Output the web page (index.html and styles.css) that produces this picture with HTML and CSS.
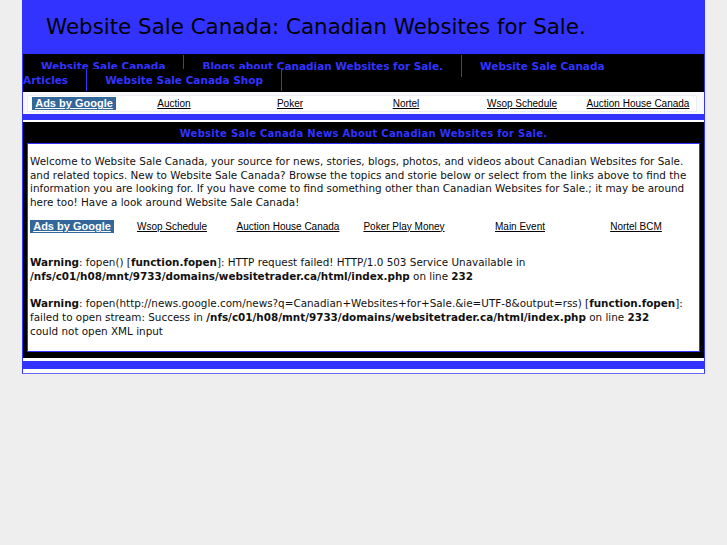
FILE: index.html
```html
<!DOCTYPE html>
<html>
<head>
<meta charset="utf-8">
<title>Website Sale Canada</title>
<link rel="stylesheet" href="styles.css">
</head>
<body>
<div class="page">
  <div class="header">
    <h1 class="title">Website Sale Canada: Canadian Websites for Sale.</h1>
  </div>
  <div class="nav"><a class="nav-link" href="#">Website Sale Canada</a><a class="nav-link" href="#">Blogs about Canadian Websites for Sale.</a><a class="nav-link" href="#">Website Sale Canada Articles</a><a class="nav-link" href="#">Website Sale Canada Shop</a></div>
  <div class="adbar">
    <div class="adrow top-row">
      <span class="ads-cell"><a class="ads-by" href="#">Ads by Google</a></span>
      <span class="ad-cell"><a href="#">Auction</a></span>
      <span class="ad-cell"><a href="#">Poker</a></span>
      <span class="ad-cell"><a href="#">Nortel</a></span>
      <span class="ad-cell"><a href="#">Wsop Schedule</a></span>
      <span class="ad-cell"><a href="#">Auction House Canada</a></span>
    </div>
  </div>
  <div class="band"></div>
  <div class="news">
    <div class="news-title">Website Sale Canada News About Canadian Websites for Sale.</div>
    <div class="news-body">
      <p class="intro">Welcome to Website Sale Canada, your source for news, stories, blogs, photos, and videos about Canadian Websites for Sale. and related topics. New to Website Sale Canada? Browse the topics and storie below or select from the links above to find the information you are looking for. If you have come to find something other than Canadian Websites for Sale.; it may be around here too! Have a look around Website Sale Canada!</p>
      <div class="adrow inner-row">
        <span class="ads-cell"><a class="ads-by" href="#">Ads by Google</a></span>
        <span class="ad-cell"><a href="#">Wsop Schedule</a></span>
        <span class="ad-cell"><a href="#">Auction House Canada</a></span>
        <span class="ad-cell"><a href="#">Poker Play Money</a></span>
        <span class="ad-cell"><a href="#">Main Event</a></span>
        <span class="ad-cell"><a href="#">Nortel BCM</a></span>
      </div>
      <div class="warn"><br>
<b>Warning</b>: fopen() [<b>function.fopen</b>]: HTTP request failed! HTTP/1.0 503 Service Unavailable in <b>/nfs/c01/h08/mnt/9733/domains/websitetrader.ca/html/index.php</b> on line <b>232</b><br>
<br>
<b>Warning</b>: fopen(http://news.google.com/news?q=Canadian+Websites+for+Sale.&amp;ie=UTF-8&amp;output=rss) [<b>function.fopen</b>]: failed to open stream: Success in <b>/nfs/c01/h08/mnt/9733/domains/websitetrader.ca/html/index.php</b> on line <b>232</b><br>
could not open XML input</div>
    </div>
  </div>
  <div class="gap-bottom"></div>
  <div class="band-bottom"></div>
  <div class="foot"></div>
</div>
</body>
</html>
```

FILE: styles.css
```css
html, body {
  margin: 0;
  padding: 0;
}
body {
  background: #eeeeee;
  font-family: "DejaVu Sans", Verdana, sans-serif;
}
.page {
  margin-left: 22px;
  width: 681px;
  border-left: 1px solid #3333ff;
  border-right: 1px solid #3333ff;
  border-bottom: 1px solid #6666ff;
  background: #ffffff;
}
.header {
  height: 54px;
  background: #3333ff;
  display: flex;
  align-items: center;
}
.title {
  margin: 0 0 0 23px;
  font-weight: normal;
  font-size: 21.4px;
  color: #000000;
  padding-bottom: 1px;
}
.nav {
  background: #000000;
  padding: 5px 0;
  font-size: 10.5px;
  font-weight: bold;
  line-height: 14px;
}
.nav-link {
  color: #3333ff;
  text-decoration: none;
  background: #000000;
  padding: 5px 18px;
  border-right: 1px solid #3333ff;
}
.adbar {
  padding: 4px 0 3px 5px;
  background: #f8f8ff;
}
.adrow {
  display: flex;
  align-items: center;
  background: #ffffff;
  font-family: "Liberation Sans", Arial, sans-serif;
  font-size: 10px;
}
.top-row {
  width: 664px;
  height: 15px;
  padding-left: 4px;
  box-shadow: 0 0 0 1px #eeeeee;
}
.ads-cell {
  width: 84px;
  flex: none;
  background: #336699;
  text-align: center;
  height: 13px;
  line-height: 13px;
}
.ads-by {
  color: #ffffff;
  font-weight: bold;
  font-size: 11px;
}
.ad-cell {
  width: 116px;
  flex: none;
  text-align: center;
}
.ad-cell a {
  color: #000000;
}
.band {
  height: 6px;
  background: #3333ff;
  border-bottom: 2px solid #ffffff;
}
.news {
  background: #000000;
  padding: 0 4px 6px 4px;
}
.news-title {
  color: #3333ff;
  font-size: 10px;
  font-weight: bold;
  letter-spacing: 0.28px;
  text-align: center;
  padding-top: 2px;
  height: 19px;
  line-height: 19px;
}
.news-body {
  background: #ffffff;
  border: 1px solid #3333ff;
  padding: 11px 2px 13px 2px;
  font-size: 10.4px;
  line-height: 13.67px;
  color: #111111;
}
.intro {
  margin: 0;
}
.inner-row {
  margin: 10px 0 9px 0;
  width: 664px;
  height: 14px;
}
.gap-bottom {
  height: 3px;
}
.band-bottom {
  height: 8px;
  background: #3333ff;
}
.foot {
  height: 4px;
}
```
